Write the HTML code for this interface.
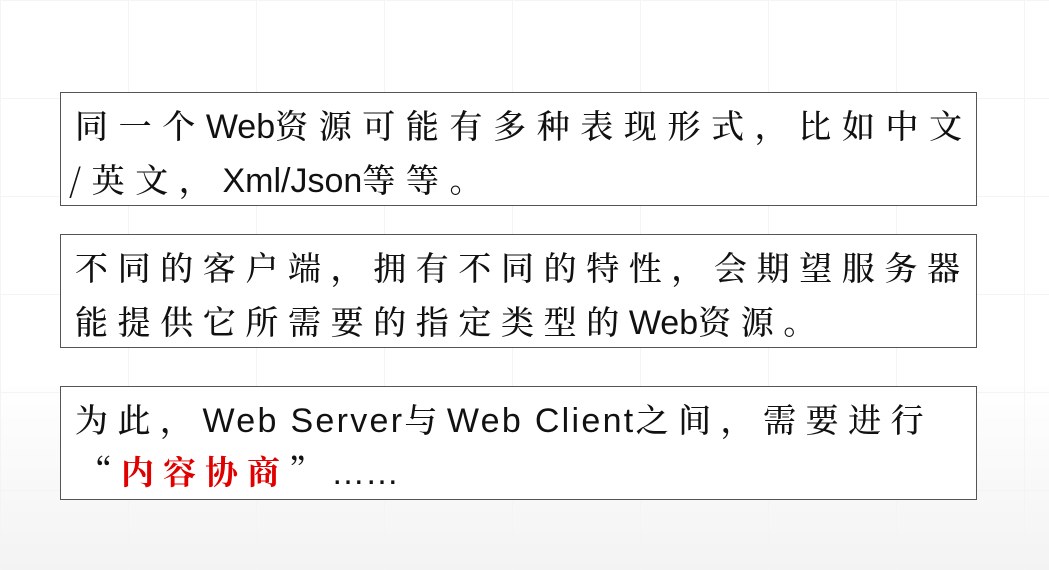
<!DOCTYPE html>
<html><head><meta charset="utf-8"><style>
body{margin:0;width:1049px;height:570px;overflow:hidden;background:linear-gradient(#fff 0,#fff 380px,#f3f3f3 570px);position:relative;font-family:"Liberation Sans","Noto Serif CJK SC",serif;}
.grid{position:absolute;inset:0;background-image:linear-gradient(#f4f4f4 1px,transparent 1px),linear-gradient(90deg,#f4f4f4 1px,transparent 1px);background-size:128px 98px;}
.box{position:absolute;left:60px;width:917px;height:112px;border:1.5px solid #555;background:#fff;box-sizing:border-box;}
.l{position:absolute;left:14px;font-size:33px;color:#111;white-space:nowrap;font-family:"Noto Serif CJK SC","Noto Sans CJK SC",serif;font-weight:500;letter-spacing:9.6px;line-height:40px;}
.lat{font-family:"Liberation Sans",sans-serif;letter-spacing:0;font-size:34px;font-weight:normal;}
.r{color:#e00000;font-weight:bold;}
</style></head><body>
<div class="grid"></div>
<div class="box" style="top:92px;height:114px">
<div class="l" style="top:12px;letter-spacing:10.6px">同一个<span class="lat">Web</span>资源可能有多种表现形式，比如中文</div>
<div class="l" style="top:66px;left:8px;letter-spacing:10.6px">/英文，<span class="lat">Xml/Json</span>等等。</div>
</div>
<div class="box" style="top:234px;height:114px">
<div class="l" style="top:12px">不同的客户端，拥有不同的特性，会期望服务器</div>
<div class="l" style="top:66px">能提供它所需要的指定类型的<span class="lat">Web</span>资源。</div>
</div>
<div class="box" style="top:386px;height:114px">
<div class="l" style="top:12px;letter-spacing:9.5px">为此，<span class="lat" style="letter-spacing:2.3px">Web Server</span>与<span class="lat" style="letter-spacing:2.3px">Web Client</span>之间，需要进行</div>
<div class="l" style="top:64px;left:18px;letter-spacing:9px">“<span class="r">内容协商</span>”<span class="lat">……</span></div>
</div>
</body></html>
